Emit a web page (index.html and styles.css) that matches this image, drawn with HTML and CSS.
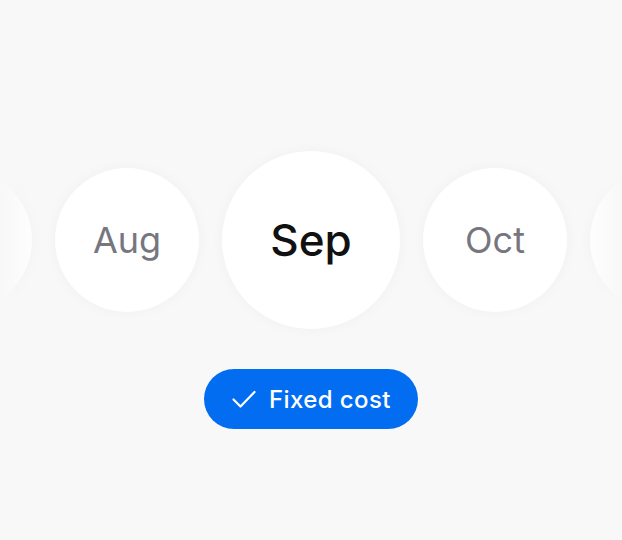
FILE: index.html
```html
<!DOCTYPE html>
<html lang="en">
<head>
  <meta charset="UTF-8">
  <meta name="viewport" content="width=device-width, initial-scale=1.0">
  <title>Month picker</title>
  <link rel="stylesheet" href="styles.css">
</head>
<body>

  <div class="picker">
    <div class="months">
      <div class="month"></div>
      <div class="month"><span>Aug</span></div>
      <div class="month active"><span>Sep</span></div>
      <div class="month"><span>Oct</span></div>
      <div class="month"></div>
    </div>
  </div>

  <div class="actions">
    <button class="tag">
      <svg width="24" height="24" viewBox="0 0 24 24" fill="none" stroke="currentColor" stroke-width="2.2" stroke-linecap="round" stroke-linejoin="round">
        <path d="M1.5 12.5L8.5 19.5L22.5 5"/>
      </svg>
      Fixed cost
    </button>
  </div>

</body>
</html>
```

FILE: styles.css
```css
body {
  margin: 0;
  background: #f8f8f8;
  font-family: Inter, "Noto Sans", sans-serif;
  height: 540px;
  overflow: hidden;
}
.picker {
  position: relative;
  padding-top: 151px;
}
.picker::before,
.picker::after {
  content: "";
  position: absolute;
  top: 140px;
  bottom: 0;
  width: 40px;
  z-index: 1;
}
.picker::before {
  left: 0;
  background: linear-gradient(to right, #f8f8f8, rgba(248,248,248,0));
}
.picker::after {
  right: 0;
  background: linear-gradient(to left, #f8f8f8, rgba(248,248,248,0));
}
.months {
  display: flex;
  justify-content: center;
  align-items: center;
  gap: 23px;
  height: 178px;
}
.month {
  flex: none;
  width: 144px;
  height: 144px;
  border-radius: 50%;
  background: #fff;
  box-shadow: 0 0 14px rgba(0,0,0,0.035);
  display: flex;
  align-items: center;
  justify-content: center;
  font-size: 36px;
  color: #77767e;
}
.month.active {
  width: 178px;
  height: 178px;
  font-size: 44px;
  font-weight: 500;
  color: #111;
}
.actions {
  display: flex;
  justify-content: center;
  margin-top: 40px;
}
.tag {
  display: flex;
  align-items: center;
  gap: 13px;
  height: 60px;
  padding: 0 27px 0 28px;
  border: none;
  border-radius: 30px;
  background: #036df2;
  color: #fff;
  font-family: inherit;
  font-size: 24px;
  font-weight: 500;
  letter-spacing: 0.4px;
}
```
